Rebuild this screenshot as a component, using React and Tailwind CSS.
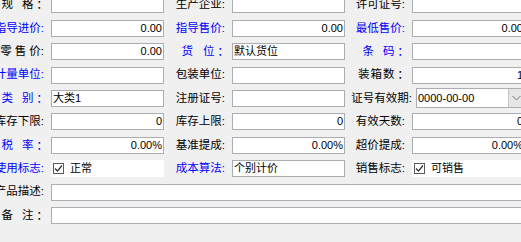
const lbl = (blue) =>
  `flex justify-end items-center whitespace-nowrap text-[11.5px] leading-none ${blue ? "text-[#0000ff]" : "text-black"}`;

// four-char label with ascii colon
const L4 = ({ t, blue, pr = "pr-[7px]" }) => (
  <div className={lbl(blue)}>
    <span className={pr}>{t}:</span>
  </div>
);

// spaced label with full-width colon
const LS = ({ c, blue, gap = "gap-[9px]" }) => (
  <div className={lbl(blue)}>
    <span className="flex pr-[6px]">
      <span className={`flex ${gap}`}>
        {c.map((ch) => (
          <span key={ch}>{ch}</span>
        ))}
      </span>
      <span className="font-['Noto_Sans_CJK_TC',sans-serif]">：</span>
    </span>
  </div>
);

const Box = ({ v, right, wide }) => (
  <div
    className={`h-[17px] bg-white border border-[#abadb3] flex items-center px-[1px] text-[11px] leading-none text-black whitespace-nowrap overflow-hidden ${
      right ? "justify-end" : ""
    } ${wide ? "col-span-5" : ""}`}
  >
    {v}
  </div>
);

const Check = ({ t }) => (
  <div className="h-[17px] bg-white flex items-center gap-[6px] pl-[2px] text-[11px] leading-none text-black">
    <span className="w-[11px] h-[11px] border border-[#5a5a5a] bg-white flex items-center justify-center">
      <svg width="9" height="9" viewBox="0 0 9 9">
        <path d="M1 4.5 L3.5 7 L8 1.5" fill="none" stroke="#333" strokeWidth="1.2" />
      </svg>
    </span>
    <span>{t}</span>
  </div>
);

const DateBox = () => (
  <div className="ml-[4px] h-[20px] bg-white border border-[#abadb3] flex items-stretch text-[11px] leading-none text-black">
    <div className="flex-1 flex items-center pl-[1px]">0000-00-00</div>
    <div className="w-[16px] bg-[#e6e6e6] border-l border-[#c4c4c4] flex items-center justify-center">
      <svg width="9" height="6" viewBox="0 0 9 6">
        <path d="M0.5 1 L4.5 5 L8.5 1" fill="none" stroke="#7a7a7a" strokeWidth="1" />
      </svg>
    </div>
  </div>
);

export default function App() {
  return (
    <div className="w-[521px] h-[242px] overflow-hidden bg-[#f0f0f0] font-['Liberation_Sans','Noto_Sans_CJK_SC',sans-serif]">
      <div className="grid grid-cols-[51px_113px_68px_113px_67px_113px] auto-rows-[17px] gap-y-[6.4px] items-center mt-[-3.6px]">
        <LS c={["规", "格"]} />
        <Box />
        <L4 t="生产企业" />
        <Box />
        <L4 t="许可证号" />
        <Box />

        <L4 t="指导进价" blue />
        <Box v="0.00" right />
        <L4 t="指导售价" blue />
        <Box v="0.00" right />
        <L4 t="最低售价" blue />
        <Box v="0.00" right />

        <div className={lbl(false)}>
          <span className="flex gap-[3px] pr-[7px]">
            <span>零</span>
            <span>售</span>
            <span>价:</span>
          </span>
        </div>
        <Box v="0.00" right />
        <LS c={["货", "位"]} blue gap="gap-[10px]" />
        <Box v="默认货位" />
        <LS c={["条", "码"]} blue />
        <Box />

        <L4 t="计量单位" blue />
        <Box />
        <L4 t="包装单位" />
        <Box />
        <LS c={["装", "箱", "数"]} gap="gap-[1px]" />
        <Box v="1" right />

        <LS c={["类", "别"]} blue />
        <Box v="大类1" />
        <L4 t="注册证号" />
        <Box />
        <L4 t="证号有效期" pr="pr-[0px]" />
        <DateBox />

        <L4 t="库存下限" />
        <Box v="0" right />
        <L4 t="库存上限" />
        <Box v="0" right />
        <L4 t="有效天数" />
        <Box v="0" right />

        <LS c={["税", "率"]} blue />
        <Box v="0.00%" right />
        <L4 t="基准提成" />
        <Box v="0.00%" right />
        <L4 t="超价提成" />
        <Box v="0.00%" right />

        <L4 t="使用标志" blue />
        <Check t="正常" />
        <L4 t="成本算法" blue />
        <Box v="个别计价" />
        <L4 t="销售标志" />
        <Check t="可销售" />

        <L4 t="产品描述" />
        <Box wide />

        <LS c={["备", "注"]} />
        <Box wide />
      </div>
    </div>
  );
}
